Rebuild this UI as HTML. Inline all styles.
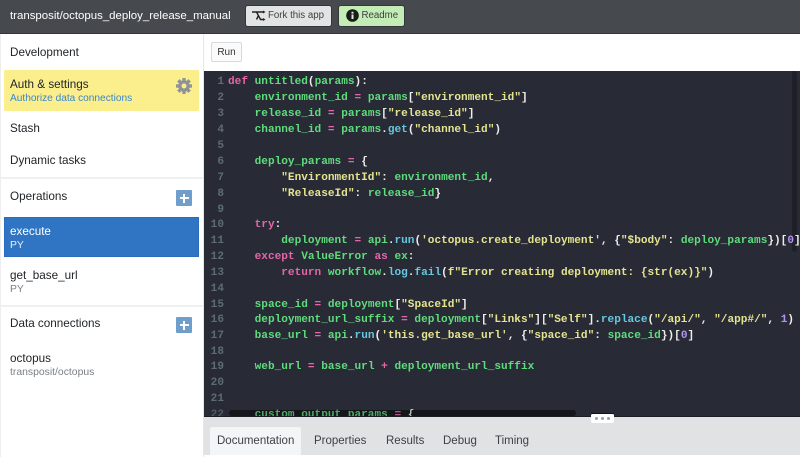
<!DOCTYPE html>
<html><head><meta charset="utf-8"><style>
html,body{margin:0;padding:0;width:800px;height:457px;overflow:hidden;background:#fff;font-family:"Liberation Sans",sans-serif;}
#w{position:absolute;left:0;top:0;width:800px;height:457px;overflow:hidden;filter:blur(.3px);}
.a{position:absolute;white-space:pre;}
#top{position:absolute;left:0;top:0;width:800px;height:33px;background:#464a4e;border-bottom:1px solid #33373a;}
.btn{position:absolute;top:5px;height:22px;border-radius:3px;box-sizing:border-box;border:1px solid #33373a;font-size:9.7px;color:#3c4043;line-height:18px;}
.s{font-size:11.7px;color:#212529;line-height:14px;}
.t{font-size:10.4px;color:#7b8086;line-height:12px;}
.plus{position:absolute;left:176px;width:16px;height:16px;background:#6f9ecb;border-radius:1px;}
.plus:before{content:"";position:absolute;left:3.5px;top:7px;width:9px;height:2px;background:#fff;}
.plus:after{content:"";position:absolute;left:7px;top:3.5px;width:2px;height:9px;background:#fff;}
.hr{position:absolute;left:1px;width:202px;height:2px;background:#eff0f1;}
#ed{position:absolute;left:204px;top:71px;width:596px;height:346px;background:#282a36;overflow:hidden;font-family:"Liberation Mono",monospace;font-size:11.1px;font-weight:bold;color:#50fa7b;}
.l{position:absolute;left:24px;white-space:pre;height:16px;line-height:16px;color:#5fdc7c;}
.n{position:absolute;left:0;width:20px;text-align:right;height:16px;line-height:16px;color:#5d6b73;}
i{font-style:normal;}
.k{color:#e466a8;}.y{color:#e4e490;}.c{color:#66c8de;}.w{color:#eeeeea;}.p{color:#b494ec;}
.tab{position:absolute;top:434px;font-size:11.5px;color:#3d4145;line-height:14px;}
</style></head><body><div id="w">
<div class="a" style="left:0;top:34px;width:1px;height:423px;background:#eeeeee"></div>
<div id="top"></div>
<div class="a" style="left:10px;top:8px;font-size:11.44px;color:#fff;line-height:16px">transposit/octopus_deploy_release_manual</div>
<div class="btn" style="left:245px;width:87px;background:#e2e3e5">
<svg class="a" style="left:6px;top:4px" width="14" height="12" viewBox="0 0 14 12"><path d="M0 2H4.500L8.500 9.500H12M4 2H12M6.500 5.500L4.500 9.500" fill="none" stroke="#222" stroke-width="1.400"/><path d="M11 0.500V3.500L13.500 2ZM11 8V11L13.500 9.500Z" fill="#222"/></svg>
<span class="a" style="left:22px;top:1px">Fork this app</span></div>
<div class="btn" style="left:338px;width:67px;background:#c3ecb6">
<svg class="a" style="left:7px;top:3px" width="13" height="13" viewBox="0 0 13 13"><circle cx="6.500" cy="6.500" r="6.300" fill="#1a1a1a"/><rect x="5.500" y="5.500" width="2" height="4.500" fill="#d8f0d0"/><rect x="5.500" y="2.800" width="2" height="1.800" fill="#d8f0d0"/></svg>
<span class="a" style="left:22.500px;top:1px">Readme</span></div>

<div class="a" style="left:203px;top:34px;width:1px;height:423px;background:#e6e7e8"></div>
<div class="a s" style="left:10px;top:46px">Development</div>
<div class="a" style="left:4px;top:70px;width:195px;height:41px;background:#fbef8d;border-radius:1px"></div>
<div class="a s" style="left:10px;top:78px">Auth &amp; settings</div>
<div class="a" style="left:10px;top:93px;font-size:10.15px;line-height:12px;color:#3b86c9">Authorize data connections</div>
<svg class="a" style="left:176px;top:77.500px" width="16" height="16" viewBox="0 0 24 24"><g fill="#8f9397"><rect x="9.500" y="0" width="5" height="24"/><rect x="9.500" y="0" width="5" height="24" transform="rotate(45 12 12)"/><rect x="9.500" y="0" width="5" height="24" transform="rotate(90 12 12)"/><rect x="9.500" y="0" width="5" height="24" transform="rotate(135 12 12)"/></g><circle cx="12" cy="12" r="6.200" fill="none" stroke="#8f9397" stroke-width="5"/><circle cx="12" cy="12" r="3.700" fill="#fbef8d"/></svg>
<div class="a s" style="left:10px;top:122px">Stash</div>
<div class="a s" style="left:10px;top:154px">Dynamic tasks</div>
<div class="hr" style="top:177px"></div>
<div class="a s" style="left:10px;top:190px">Operations</div>
<div class="plus" style="top:190px"></div>
<div class="a" style="left:4px;top:217px;width:195px;height:40px;box-sizing:border-box;background:#2f75c3;border:1px solid #2a6cc0"></div>
<div class="a s" style="left:10px;top:225px;color:#fff">execute</div>
<div class="a t" style="left:10px;top:240px;color:#e6eefa">PY</div>
<div class="a s" style="left:10px;top:269px">get_base_url</div>
<div class="a t" style="left:10px;top:284px">PY</div>
<div class="hr" style="top:305px"></div>
<div class="a s" style="left:10px;top:317px">Data connections</div>
<div class="plus" style="top:317px"></div>
<div class="a s" style="left:10px;top:352px">octopus</div>
<div class="a t" style="left:10px;top:367px">transposit/octopus</div>

<div class="a" style="left:211px;top:42px;width:31px;height:20px;box-sizing:border-box;border:1px solid #d8d9da;border-radius:2px;background:#fafafa;font-size:10px;color:#333;text-align:center;line-height:19px">Run</div>

<div id="ed">
<div class="a" style="left:25px;top:339px;width:347px;height:6px;background:#15161c;border-radius:3px"></div>
<div class="a" style="left:588px;top:0;width:5px;height:181px;background:#1e1f27;border-radius:3px"></div>
<div class="n" style="top:3px">1</div><div class="l" style="top:3px"><i class="k">def</i> untitled<i class="w">(</i>params<i class="w">):</i></div>
<div class="n" style="top:19px">2</div><div class="l" style="top:19px">    environment_id <i class="k">=</i> params<i class="w">[</i><i class="y">"environment_id"</i><i class="w">]</i></div>
<div class="n" style="top:35px">3</div><div class="l" style="top:35px">    release_id <i class="k">=</i> params<i class="w">[</i><i class="y">"release_id"</i><i class="w">]</i></div>
<div class="n" style="top:51px">4</div><div class="l" style="top:51px">    channel_id <i class="k">=</i> params<i class="w">.</i><i class="c">get</i><i class="w">(</i><i class="y">"channel_id"</i><i class="w">)</i></div>
<div class="n" style="top:67px">5</div>
<div class="n" style="top:83px">6</div><div class="l" style="top:83px">    deploy_params <i class="k">=</i> <i class="w">{</i></div>
<div class="n" style="top:99px">7</div><div class="l" style="top:99px">        <i class="y">"EnvironmentId"</i><i class="w">:</i> environment_id<i class="w">,</i></div>
<div class="n" style="top:115px">8</div><div class="l" style="top:115px">        <i class="y">"ReleaseId"</i><i class="w">:</i> release_id<i class="w">}</i></div>
<div class="n" style="top:131px">9</div>
<div class="n" style="top:146px">10</div><div class="l" style="top:146px">    <i class="k">try</i><i class="w">:</i></div>
<div class="n" style="top:162px">11</div><div class="l" style="top:162px">        deployment <i class="k">=</i> api<i class="w">.</i><i class="c">run</i><i class="w">(</i><i class="y">'octopus.create_deployment'</i><i class="w">, {</i><i class="y">"$body"</i><i class="w">:</i> deploy_params<i class="w">})[</i><i class="p">0</i><i class="w">]</i></div>
<div class="n" style="top:178px">12</div><div class="l" style="top:178px">    <i class="k">except</i> ValueError <i class="k">as</i> ex<i class="w">:</i></div>
<div class="n" style="top:194px">13</div><div class="l" style="top:194px">        <i class="k">return</i> workflow<i class="w">.</i><i class="c">log</i><i class="w">.</i><i class="c">fail</i><i class="w">(</i><i class="y">f"Error creating deployment: {str(ex)}"</i><i class="w">)</i></div>
<div class="n" style="top:210px">14</div>
<div class="n" style="top:226px">15</div><div class="l" style="top:226px">    space_id <i class="k">=</i> deployment<i class="w">[</i><i class="y">"SpaceId"</i><i class="w">]</i></div>
<div class="n" style="top:241px">16</div><div class="l" style="top:241px">    deployment_url_suffix <i class="k">=</i> deployment<i class="w">[</i><i class="y">"Links"</i><i class="w">][</i><i class="y">"Self"</i><i class="w">].</i><i class="c">replace</i><i class="w">(</i><i class="y">"/api/"</i><i class="w">,</i> <i class="y">"/app#/"</i><i class="w">,</i> <i class="p">1</i><i class="w">)</i></div>
<div class="n" style="top:257px">17</div><div class="l" style="top:257px">    base_url <i class="k">=</i> api<i class="w">.</i><i class="c">run</i><i class="w">(</i><i class="y">'this.get_base_url'</i><i class="w">, {</i><i class="y">"space_id"</i><i class="w">:</i> space_id<i class="w">})[</i><i class="p">0</i><i class="w">]</i></div>
<div class="n" style="top:273px">18</div>
<div class="n" style="top:288px">19</div><div class="l" style="top:288px">    web_url <i class="k">=</i> base_url <i class="k">+</i> deployment_url_suffix</div>
<div class="n" style="top:304px">20</div>
<div class="n" style="top:320px">21</div>
<div class="n" style="top:336px;opacity:.75">22</div><div class="l" style="top:336px;opacity:.75">    custom_output_params <i class="k">=</i> <i class="w">{</i></div>
</div>

<div class="a" style="left:204px;top:417px;width:596px;height:38px;background:#e1e2e4"></div>
<div class="a" style="left:204px;top:416px;width:596px;height:1px;background:#1c1d24"></div>
<div class="a" style="left:591px;top:413px;width:23px;height:10px;background:#fff;border-radius:2px;border-top:1px solid #111;box-sizing:border-box"></div>
<div class="a" style="left:595px;top:417px;width:3px;height:3px;border-radius:50%;background:#9aa0a4"></div>
<div class="a" style="left:601px;top:417px;width:3px;height:3px;border-radius:50%;background:#9aa0a4"></div>
<div class="a" style="left:607px;top:417px;width:3px;height:3px;border-radius:50%;background:#9aa0a4"></div>
<div class="a" style="left:210px;top:427px;width:91px;height:28px;background:#f4f5f6;border-radius:2px 2px 0 0"></div>
<div class="tab" style="left:217px">Documentation</div>
<div class="tab" style="left:314px">Properties</div>
<div class="tab" style="left:386px">Results</div>
<div class="tab" style="left:443px">Debug</div>
<div class="tab" style="left:495px">Timing</div>
</div></body></html>
